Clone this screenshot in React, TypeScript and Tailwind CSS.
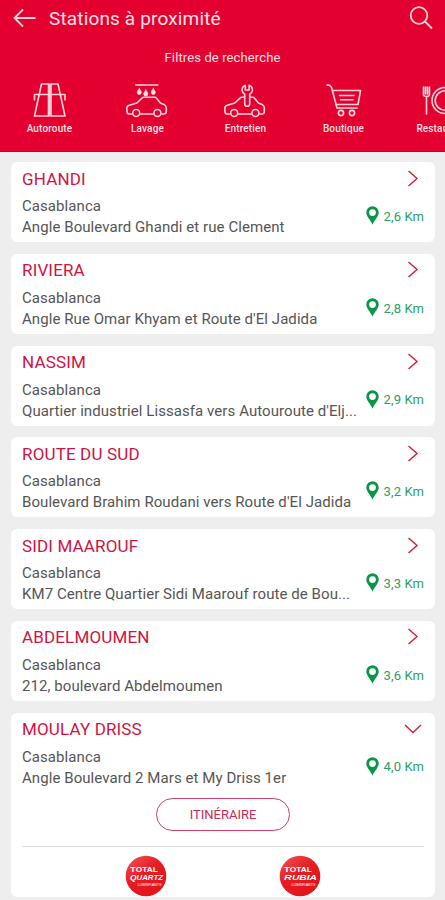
import type { ReactNode } from "react"

type Station = {
  name: string
  address: string
  distance: string
  open?: boolean
}

const stations: Station[] = [
  { name: "GHANDI", address: "Angle Boulevard Ghandi et rue Clement", distance: "2,6 Km" },
  { name: "RIVIERA", address: "Angle Rue Omar Khyam et Route d'El Jadida", distance: "2,8 Km" },
  { name: "NASSIM", address: "Quartier industriel Lissasfa vers Autouroute d'Elj...", distance: "2,9 Km" },
  { name: "ROUTE DU SUD", address: "Boulevard Brahim Roudani vers Route d'El Jadida", distance: "3,2 Km" },
  { name: "SIDI MAAROUF", address: "KM7 Centre Quartier Sidi Maarouf route de Bou...", distance: "3,3 Km" },
  { name: "ABDELMOUMEN", address: "212, boulevard Abdelmoumen", distance: "3,6 Km" },
  { name: "MOULAY DRISS", address: "Angle Boulevard 2 Mars et My Driss 1er", distance: "4,0 Km", open: true },
]

function FilterIcon({ children }: { children: ReactNode }) {
  return (
    <svg width="44" height="38" viewBox="0 0 44 38" fill="none" stroke="#ffd5da" strokeWidth="1.6" strokeLinejoin="round" strokeLinecap="round">
      {children}
    </svg>
  )
}

const carBody = "M6.5 32H3.8Q2 31.5 2 28v-1.5Q2 24 4.5 23.3L12 21l5.5-5.2Q18 15.2 19 15.2H30q1 0 1.6.8l4 5 4.2 1.8Q41.5 24 41.5 26v3.5Q41.5 32 39 32h-2M15 32H29"

function CarWheels() {
  return (
    <>
      <circle cx="11.4" cy="31" r="3.5" fill="#e30030" />
      <circle cx="32.6" cy="31" r="3.5" fill="#e30030" />
    </>
  )
}

const filters = [
  {
    label: "Autoroute",
    icon: (
      <FilterIcon>
        <path d="M13.5 2h7v32H6.5l7-32ZM23 2h7l7 32H23V2Z" />
        <path d="M21.8 2v32" />
        <path d="M6.5 18v-5.5h30.5V18" />
      </FilterIcon>
    ),
  },
  {
    label: "Lavage",
    icon: (
      <FilterIcon>
        <g transform="translate(-1.2 0)">
          <path d="M11 3H33" />
          <g fill="#ffe3e6" strokeWidth="0.8">
            <path d="M14.5 6.5q2.300 3 2 4a2 2 0 0 1-4 0q-.2-1 2-4Z" />
            <path d="M21 8q2.300 3 2 4a2 2 0 0 1-4 0q-.2-1 2-4Z" />
            <path d="M28.5 6.500q2.300 3 2 4a2 2 0 0 1-4 0q-.2-1 2-4Z" />
          </g>
          <path d={carBody} />
          <CarWheels />
        </g>
      </FilterIcon>
    ),
  },
  {
    label: "Entretien",
    icon: (
      <FilterIcon>
        <g transform="translate(-1.2 0)">
          <path d={carBody} />
          <CarWheels />
          <path
            fill="#e30030"
            d="M22.5 3.200Q19 4.500 19.300 8.500q.4 2.500 2.600 3.800V22q0 2.300 2.500 2.300T26.900 22v-9.700Q29.300 11 29.600 8.500q.3-4-3.300-5.300V8h-3.800Z"
          />
        </g>
      </FilterIcon>
    ),
  },
  {
    label: "Boutique",
    icon: (
      <FilterIcon>
        <path d="M5 3q3.700-.2 4.500 2.500L15 26H35" />
        <path d="M10.5 8.500H38.500l-2.500 14H14" />
        <path d="M17.5 13.500h14.500M18.500 17.800h12.500" />
        <circle cx="19" cy="31" r="2.6" />
        <circle cx="30" cy="31" r="2.6" />
      </FilterIcon>
    ),
  },
  {
    label: "Restaurant",
    icon: (
      <FilterIcon>
        <path d="M3.5 5v7.500q0 2 3 2t3-2V5M5.500 5v7M7.500 5v7M6.500 14.500V32" />
        <circle cx="25" cy="18.5" r="13" />
        <circle cx="25" cy="18.5" r="9.8" />
      </FilterIcon>
    ),
  },
]

function Badge({ name, id }: { name: string; id: string }) {
  return (
    <svg width="42" height="42" viewBox="0 0 42 42">
      <defs>
        <linearGradient id={id} x1="0" y1="0" x2="0.7" y2="1">
          <stop offset="0" stopColor="#f0575a" />
          <stop offset="0.5" stopColor="#e61c22" />
          <stop offset="1" stopColor="#e3141b" />
        </linearGradient>
      </defs>
      <circle cx="21" cy="21" r="20.3" fill={`url(#${id})`} />
      <g fill="#fff" fontFamily="'Liberation Sans', sans-serif" fontWeight="700">
        <text x="5" y="17" fontSize="8" textLength="28" lengthAdjust="spacingAndGlyphs">
          T<tspan fontSize="7">OTAL</tspan>
        </text>
        <text x="5" y="25.2" fontSize="8" fontStyle="italic" textLength="33" lengthAdjust="spacingAndGlyphs">
          {name[0]}<tspan fontSize="7.5">{name.slice(1)}</tspan>
        </text>
        <text x="12.5" y="30.8" fontSize="4" fontWeight="400" textLength="24" lengthAdjust="spacingAndGlyphs">
          LUBRIFIANTS
        </text>
      </g>
    </svg>
  )
}

function StationCard({ station }: { station: Station }) {
  return (
    <div className={`shrink-0 rounded-md bg-white px-[11px] pt-[3px] ${station.open ? "h-[184px]" : "h-20"}`}>
      <div className="flex h-[27px] items-center justify-between">
        <h2 className="text-[17px] leading-6 tracking-[0.15px] text-[#cf1442]">{station.name}</h2>
        <svg className="mr-[2px]" width="18" height="18" viewBox="0 0 18 18" fill="none" stroke="#d4243c" strokeWidth="1.5">
          <path d={station.open ? "M1 5l8 7.5L17 5" : "M4.500 1l8.500 7.500L4.500 16"} />
        </svg>
      </div>
      <div className="flex justify-between pt-[3px]">
        <div className="pt-px text-[15px] leading-[21px] tracking-[0.07px] whitespace-nowrap text-[#555]">
          <p>Casablanca</p>
          <p>{station.address}</p>
        </div>
        <div className="flex h-[42px] items-center gap-[5px] text-[13px] tracking-[0.1px] whitespace-nowrap text-[#2ba062]">
          <svg className="mb-px" width="13" height="19" viewBox="0 0 13 19">
            <path
              fill="#0a9648"
              fillRule="evenodd"
              d="M6.5.3A6.200 6.200 0 0 0 .3 6.500C.3 10.500 4.300 13.500 6.500 18.700 8.700 13.500 12.700 10.500 12.700 6.500A6.200 6.200 0 0 0 6.500.3Zm0 2.900a3.400 3.400 0 1 1 0 6.800 3.400 3.400 0 0 1 0-6.800Z"
            />
          </svg>
          <span className="pt-px">{station.distance}</span>
        </div>
      </div>
      {station.open && (
        <>
          <button className="mx-auto mt-[9px] block h-[33px] w-[134px] rounded-full border border-[#cc3d65] pt-px text-[13px] text-[#cc2952]">
            ITINÉRAIRE
          </button>
          <div className="mt-[15px] flex justify-around border-t border-[#ddd] px-[47px] pt-[8px]">
            <Badge name="QUARTZ" id="quartz" />
            <Badge name="RUBIA" id="rubia" />
          </div>
        </>
      )}
    </div>
  )
}

export default function App() {
  return (
    <div className="h-[900px] w-[445px] overflow-hidden bg-[#eee] font-[Roboto,sans-serif]">
      <header className="h-[152px] border-b border-[#cf0010] bg-[#e30030] text-[#ffe0e4]">
        <div className="flex h-[38px] items-center pr-3 pl-[13px]">
          <svg className="mb-[2px]" width="24" height="20" viewBox="0 0 24 20" fill="none" stroke="#ffd5da" strokeWidth="1.8">
            <path d="M22.5 10H1.5M10 1.5L1.5 10l8.500 8.500" />
          </svg>
          <h1 className="ml-3 text-[19px] leading-6 tracking-[0.15px]">Stations à proximité</h1>
          <svg className="mb-[2px] ml-auto" width="24" height="24" viewBox="0 0 24 24" fill="none" stroke="#ffd5da" strokeWidth="1.8">
            <circle cx="10" cy="9.5" r="8.3" />
            <path d="M16 15.5l7 7" />
          </svg>
        </div>
        <p className="mt-[10px] text-center text-[13px] leading-5 tracking-[0.12px]">Filtres de recherche</p>
        <div className="mt-[14px] flex pl-[0.5px]">
          {filters.map((filter) => (
            <div key={filter.label} className="flex w-[98px] shrink-0 flex-col items-center">
              {filter.icon}
              <span className="mt-[3px] text-[10px] leading-3 font-medium tracking-[0.15px]">{filter.label}</span>
            </div>
          ))}
        </div>
      </header>
      <main className="flex flex-col gap-[11.75px] pt-[10px] pr-[10px] pl-[11px]">
        {stations.map((station) => (
          <StationCard key={station.name} station={station} />
        ))}
      </main>
    </div>
  )
}
